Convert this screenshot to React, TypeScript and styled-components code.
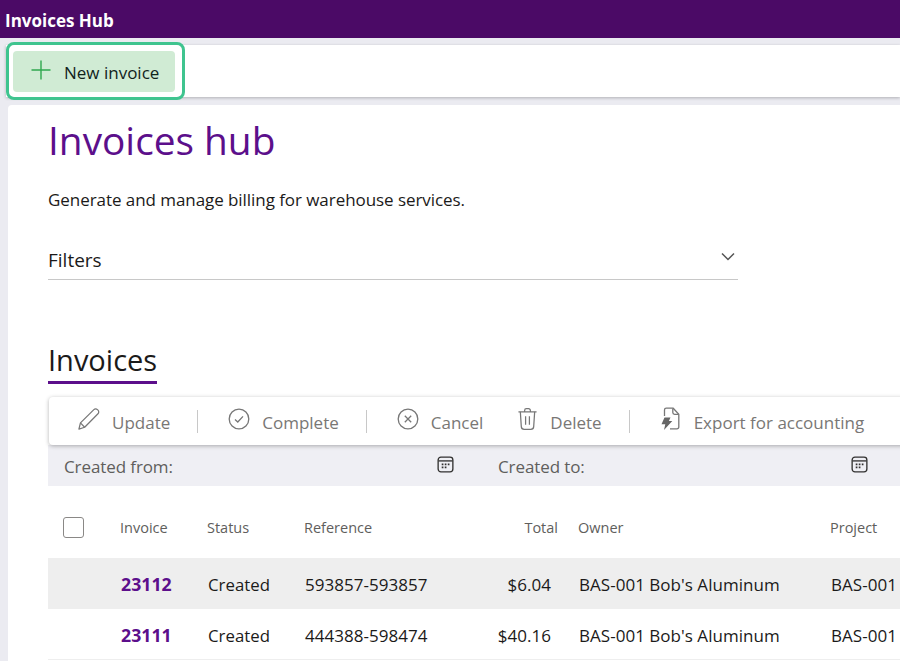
import * as React from 'react';
import styled, { createGlobalStyle } from 'styled-components';

const FONT = `"Open Sans", "Noto Sans", "Liberation Sans", sans-serif`;

const GlobalStyle = createGlobalStyle`
  html, body {
    margin: 0;
    height: 100%;
    overflow: hidden;
  }
  body {
    background: #ebebf1;
    font-family: ${FONT};
    color: #1b1a19;
  }
`;

const PlusIcon = () => (
  <svg width="22" height="22" viewBox="0 0 22 22" fill="none" stroke="#2fa84f" strokeWidth="1.4">
    <path d="M11 1.5v19M1.5 11h19" />
  </svg>
);

const PencilIcon = () => (
  <svg width="23" height="24" viewBox="0 0 24 24" fill="none" stroke="#777" strokeWidth="1.3" strokeLinejoin="round">
    <path d="M2 22.5l1.6-6.4L17.6 2.2a2.6 2.6 0 0 1 3.7 0l.6.6a2.6 2.6 0 0 1 0 3.7L8 20.6z" />
    <path d="M3.6 16.1L8 20.6" />
  </svg>
);

const CheckCircleIcon = () => (
  <svg width="22" height="22" viewBox="0 0 22 22" fill="none" stroke="#777" strokeWidth="1.3">
    <circle cx="11" cy="11" r="9.8" />
    <path d="M7 11.4l2.8 2.6L15 8.4" />
  </svg>
);

const CrossCircleIcon = () => (
  <svg width="22" height="22" viewBox="0 0 22 22" fill="none" stroke="#777" strokeWidth="1.3">
    <circle cx="11" cy="11" r="9.8" />
    <path d="M7.8 7.8l6.4 6.4M14.2 7.8l-6.4 6.4" />
  </svg>
);

const TrashIcon = () => (
  <svg width="21" height="24" viewBox="0 0 22 24" fill="none" stroke="#777" strokeWidth="1.3" strokeLinejoin="round">
    <path d="M1.5 4.5h19M8 4.5V3a1.8 1.8 0 0 1 1.8-1.8h2.4A1.8 1.8 0 0 1 14 3v1.5" />
    <path d="M3.5 4.5l1 15.5a3 3 0 0 0 3 2.8h7a3 3 0 0 0 3-2.8l1-15.5" />
    <path d="M9 9v9M13 9v9" />
  </svg>
);

const ExportIcon = () => (
  <svg width="22" height="24" viewBox="0 0 22 24" fill="none">
    <path d="M4.5 9V3a1.8 1.8 0 0 1 1.8-1.8h6.9l5.6 6V20a1.8 1.8 0 0 1-1.8 1.8H10" stroke="#777" strokeWidth="1.3" />
    <path d="M12.8 1.5v4a1.8 1.8 0 0 0 1.8 1.8h4" stroke="#777" strokeWidth="1.3" />
    <path d="M4.5 10.5h6l-1.6 3.4h3.4L4 23l1.3-5.8H1.5z" fill="#666" />
  </svg>
);

const CalendarIcon = () => (
  <svg width="17" height="17" viewBox="0 0 18 18" fill="none">
    <rect x="1.2" y="1.2" width="15.6" height="15.6" rx="3" stroke="#323130" strokeWidth="1.4" />
    <path d="M1.5 5.2h15" stroke="#323130" strokeWidth="1.4" />
    <path d="M5 8h1.8v1.8H5zM8.2 8H10v1.8H8.2zM11.4 8h1.8v1.8h-1.8zM5 11.2h1.8V13H5zM8.2 11.2H10V13H8.2z" fill="#323130" />
  </svg>
);

const ChevronIcon = () => (
  <svg width="14" height="9" viewBox="0 0 14 9" fill="none" stroke="#555" strokeWidth="1.5">
    <path d="M1 1.5l6 6 6-6" />
  </svg>
);

const AppBar = styled.header`
  height: 38px;
  background: #4b0a66;
  color: #fff;
  font-size: 17px;
  font-weight: 700;
  line-height: 42px;
  padding-left: 5px;
`;

const ActionPane = styled.div`
  display: flex;
  align-items: center;
  height: 52px;
  margin: 7px 0 8px 6px;
  padding-left: 7px;
  background: #fff;
  box-shadow: 0 1px 3px rgba(0, 0, 0, 0.25);
`;

const NewButton = styled.button`
  position: relative;
  display: flex;
  align-items: center;
  gap: 12px;
  width: 162px;
  height: 41px;
  padding: 2px 0 0 17px;
  border: 0;
  border-radius: 4px;
  background: #d0ebd4;
  color: #10231c;
  font: 400 17px ${FONT};

  svg {
    position: relative;
    top: -2px;
  }

  &::after {
    content: '';
    position: absolute;
    inset: -9px -10px -8px -7px;
    border: 3px solid #3fc48f;
    border-radius: 8px;
  }
`;

const Page = styled.main`
  margin-left: 8px;
  height: 556px;
  padding: 0 0 0 40px;
  background: #fff;
  border-radius: 4px 0 0 0;
  overflow: hidden;
`;

const Title = styled.h1`
  margin: 0;
  padding-top: 9px;
  font-size: 38.8px;
  line-height: 52px;
  font-weight: 400;
  color: #5c0f8b;
`;

const Subtitle = styled.p`
  margin: 23px 0 0;
  font-size: 17px;
  line-height: 22px;
  letter-spacing: -0.06px;
  color: #1b1a19;
`;

const FilterHeader = styled.div`
  display: flex;
  align-items: center;
  justify-content: space-between;
  width: 690px;
  height: 43px;
  margin-top: 26px;
  padding: 4px 3px 0 0;
  box-sizing: border-box;
  border-bottom: 1px solid #c8c8c8;
  font-size: 19px;

  svg {
    position: relative;
    top: -4px;
  }
`;

const SectionTab = styled.h2`
  display: inline-block;
  margin: 59px 0 0;
  height: 45px;
  box-sizing: border-box;
  border-bottom: 3px solid #5c0f8b;
  font-size: 29px;
  line-height: 42px;
  font-weight: 400;
`;

const CommandBar = styled.div`
  display: flex;
  align-items: center;
  width: 860px;
  height: 48px;
  margin: 13px 0 0 1px;
  padding-left: 28px;
  box-sizing: border-box;
  background: #fff;
  border-radius: 4px 0 0 4px;
  box-shadow: 0 1px 4px rgba(0, 0, 0, 0.3);
  position: relative;
  white-space: nowrap;
`;

const Command = styled.span`
  display: flex;
  align-items: center;
  gap: 12px;
  padding-top: 2px;
  color: #797775;
  font-size: 17px;

  svg {
    position: relative;
    top: -3px;
  }
`;

const Divider = styled.span`
  flex: none;
  width: 1px;
  height: 23px;
  margin: 0 30px 0 27px;
  background: #c8c8c8;
`;

const Spacer = styled.span`
  flex: none;
  width: 34px;
`;

const MoreDots = styled.span`
  position: absolute;
  right: 0;
  top: 24px;
  width: 2px;
  height: 2px;
  background: #777;
  box-shadow: 0 4px 0 #777;
`;

const FilterRow = styled.div`
  display: grid;
  grid-template-columns: 434px 414px;
  align-items: center;
  width: 860px;
  height: 41px;
  padding-left: 16px;
  box-sizing: border-box;
  background: #efeff4;
`;

const DateField = styled.div`
  display: flex;
  align-items: center;
  justify-content: space-between;
  padding: 2px 44px 0 0;
  color: #605e5c;
  font-size: 17px;
  letter-spacing: -0.1px;

  svg {
    position: relative;
    top: -2px;
  }
`;

const COLUMNS = '72px 87px 97px 100px 174px 252px 1fr';

const HeadRow = styled.div`
  display: grid;
  grid-template-columns: ${COLUMNS};
  align-items: center;
  width: 860px;
  height: 72px;
  padding-top: 11px;
  box-sizing: border-box;
  color: #605e5c;
  font-size: 14.5px;
`;

const Check = styled.span`
  display: block;
  width: 19px;
  height: 19px;
  margin-left: 15px;
  border: 1px solid #8a8886;
  border-radius: 3px;
`;

const HeadTotal = styled.span`
  text-align: right;
  padding-right: 20px;
`;

const Row = styled.div<{ $shaded?: boolean }>`
  display: grid;
  grid-template-columns: ${COLUMNS};
  align-items: center;
  width: 860px;
  height: 51px;
  padding-top: 2px;
  box-sizing: border-box;
  background: ${p => (p.$shaded ? '#eeeeee' : '#fff')};
  border-bottom: 1px solid #eeeeee;
  font-size: 17px;
  letter-spacing: 0.03px;
  color: #1b1a19;
  white-space: nowrap;

  > span {
    padding-left: 1px;
  }
`;

const InvoiceLink = styled.span`
  color: #5c0f8b;
  font-size: 17.7px;
  font-weight: 700;
`;

const StatusCell = styled.span`
  font-size: 16.8px;
`;

const RowTotal = styled.span`
  text-align: right;
  padding-right: 27px;
`;

const rows = [
  { id: '23112', ref: '593857-593857', total: '$6.04' },
  { id: '23111', ref: '444388-598474', total: '$40.16' },
];

export default function App() {
  return (
    <>
      <GlobalStyle />
      <AppBar>Invoices Hub</AppBar>
      <ActionPane>
        <NewButton>
          <PlusIcon />
          New invoice
        </NewButton>
      </ActionPane>
      <Page>
        <Title>Invoices hub</Title>
        <Subtitle>Generate and manage billing for warehouse services.</Subtitle>
        <FilterHeader>
          Filters
          <ChevronIcon />
        </FilterHeader>
        <SectionTab>Invoices</SectionTab>
        <CommandBar>
          <Command><PencilIcon />Update</Command>
          <Divider />
          <Command><CheckCircleIcon />Complete</Command>
          <Divider />
          <Command><CrossCircleIcon />Cancel</Command>
          <Spacer />
          <Command><TrashIcon />Delete</Command>
          <Divider />
          <Command><ExportIcon />Export for accounting</Command>
          <MoreDots />
        </CommandBar>
        <FilterRow>
          <DateField>Created from:<CalendarIcon /></DateField>
          <DateField>Created to:<CalendarIcon /></DateField>
        </FilterRow>
        <HeadRow>
          <Check />
          <span>Invoice</span>
          <span>Status</span>
          <span>Reference</span>
          <HeadTotal>Total</HeadTotal>
          <span>Owner</span>
          <span>Project</span>
        </HeadRow>
        {rows.map((r, i) => (
          <Row key={r.id} $shaded={i === 0}>
            <span />
            <InvoiceLink>{r.id}</InvoiceLink>
            <StatusCell>Created</StatusCell>
            <span>{r.ref}</span>
            <RowTotal>{r.total}</RowTotal>
            <span>BAS-001 Bob's Aluminum</span>
            <span>BAS-001</span>
          </Row>
        ))}
      </Page>
    </>
  );
}
